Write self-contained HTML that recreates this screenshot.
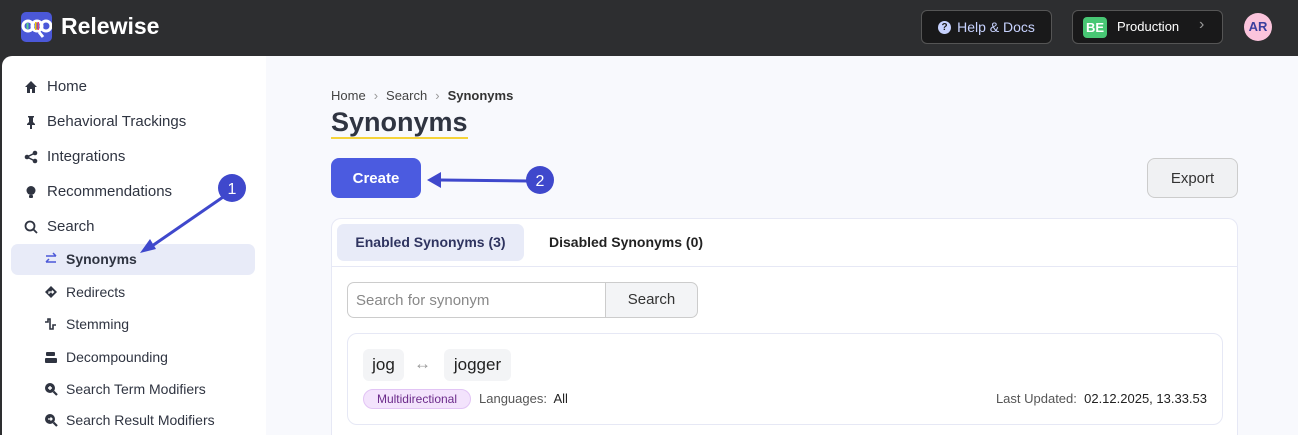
<!DOCTYPE html>
<html style="width:1298px;height:435px;overflow:hidden"><head><style>
*{box-sizing:border-box;margin:0;padding:0}
body{width:1298px;height:435px;overflow:hidden;background:#2d2e30;font-family:"Liberation Sans",sans-serif;position:relative}
.hdr{position:absolute;left:0;top:0;width:1298px;height:56px;background:#2d2e30}
.side{position:absolute;left:2px;top:56px;width:264px;height:379px;background:#fff;border-top-left-radius:10px;overflow:hidden}
.main{position:absolute;left:266px;top:56px;width:1032px;height:379px;background:#f8f9fd;overflow:hidden}
.ni{position:absolute;left:22px;font-size:15px;color:#2f3441;display:flex;align-items:center}
.ni svg{margin-right:9px}
.si{position:absolute;left:42px;font-size:14px;color:#2f3441;display:flex;align-items:center}
.si svg{margin-right:8px}
.btn{position:absolute;border-radius:8px;font-size:15px;display:flex;align-items:center;justify-content:center}
</style></head><body>
<div class="hdr">
 <div style="position:absolute;left:21px;top:12px;width:31px;height:30px;background:#4b58d8;border-radius:5px;overflow:hidden">
  <svg width="31" height="30" viewBox="0 0 31 30"><circle cx="7" cy="14" r="5" fill="none" stroke="#fff" stroke-width="3"/><circle cx="16" cy="14" r="5" fill="none" stroke="#fff" stroke-width="3"/><circle cx="25" cy="14" r="5" fill="none" stroke="#fff" stroke-width="3"/><rect x="14" y="10" width="1.5" height="8" fill="#f5c400"/><rect x="16.5" y="10" width="1.5" height="8" fill="#e94b6b"/><rect x="5.5" y="11" width="2" height="6" fill="#5ad18a"/><path d="M18 20 l4 5" stroke="#fff" stroke-width="3"/></svg>
 </div>
 <div style="position:absolute;left:61px;top:13px;font-size:23px;font-weight:bold;color:#fff">Relewise</div>
 <div style="position:absolute;left:921px;top:10px;width:131px;height:34px;border:1px solid #555;border-radius:6px;background:#19191a;color:#c7d2fe;font-size:14px;display:flex;align-items:center;justify-content:center"><span style="display:inline-block;width:13px;height:13px;border-radius:50%;background:#c7d2fe;color:#19191a;font-size:10px;font-weight:bold;text-align:center;line-height:13px;margin-right:6px">?</span>Help &amp; Docs</div>
 <div style="position:absolute;left:1072px;top:10px;width:151px;height:34px;border:1px solid #555;border-radius:6px;background:#19191a;color:#fff;font-size:13px">
  <span style="position:absolute;left:10px;top:6px;width:24px;height:21px;background:#48c774;border-radius:4px;font-weight:bold;text-align:center;line-height:21px">BE</span>
  <span style="position:absolute;left:44px;top:8px">Production</span>
  <span style="position:absolute;left:126px;top:5px;color:#999;font-size:16px">›</span>
 </div>
 <div style="position:absolute;left:1244px;top:13px;width:28px;height:28px;border-radius:50%;background:#fbc4dc;color:#3b3f9e;font-size:13px;font-weight:bold;text-align:center;line-height:28px">AR</div>
</div>
<div class="side">
 <div class="ni" style="top:22px"><svg width="14" height="14" viewBox="0 0 14 14"><path d="M7 1L1 7h2v6h3V9h2v4h3V7h2z" fill="#2f3441"/></svg>Home</div>
 <div class="ni" style="top:57px"><svg width="14" height="14" viewBox="0 0 14 14"><path d="M4 1h6v1l-1 1v4l2 2v1H8v4H6v-4H3V9l2-2V3L4 2z" fill="#2f3441"/></svg>Behavioral Trackings</div>
 <div class="ni" style="top:92px"><svg width="14" height="14" viewBox="0 0 14 14"><circle cx="11" cy="3" r="2.3" fill="#2f3441"/><circle cx="3" cy="7" r="2.3" fill="#2f3441"/><circle cx="11" cy="11" r="2.3" fill="#2f3441"/><path d="M11 3L3 7l8 4" stroke="#2f3441" stroke-width="1.5" fill="none"/></svg>Integrations</div>
 <div class="ni" style="top:127px"><svg width="14" height="14" viewBox="0 0 14 14"><circle cx="7" cy="5.5" r="4.5" fill="#2f3441"/><rect x="5" y="10" width="4" height="3" rx="1" fill="#2f3441"/></svg>Recommendations</div>
 <div class="ni" style="top:162px"><svg width="14" height="14" viewBox="0 0 14 14"><circle cx="6" cy="6" r="4.5" stroke="#2f3441" stroke-width="1.8" fill="none"/><path d="M9.5 9.5L13 13" stroke="#2f3441" stroke-width="1.8"/></svg>Search</div>
 <div style="position:absolute;left:9px;top:188px;width:244px;height:31px;background:#e8ebf8;border-radius:7px"></div>
 <div class="si" style="top:195px;font-weight:bold;color:#2f3441"><svg width="14" height="14" viewBox="0 0 14 14"><path d="M2 4h10M9 1l3 3M12 10H2M5 7l-3 3" stroke="#4b58d8" stroke-width="1.5" fill="none"/></svg>Synonyms</div>
 <div class="si" style="top:228px"><svg width="14" height="14" viewBox="0 0 14 14"><path d="M7 1l6 6-6 6-6-6z" fill="#2f3441"/><path d="M5 9V7h4M8 5.5L9.5 7 8 8.5" stroke="#fff" stroke-width="1.2" fill="none"/></svg>Redirects</div>
 <div class="si" style="top:260px"><svg width="14" height="14" viewBox="0 0 14 14"><path d="M1 5h3V2h2v10h3V8h3" stroke="#2f3441" stroke-width="1.6" fill="none"/></svg>Stemming</div>
 <div class="si" style="top:293px"><svg width="14" height="14" viewBox="0 0 14 14"><rect x="2" y="2" width="9" height="4" rx="1" fill="#2f3441"/><rect x="1" y="8" width="12" height="5" rx="1" fill="#2f3441"/></svg>Decompounding</div>
 <div class="si" style="top:325px"><svg width="14" height="14" viewBox="0 0 14 14"><circle cx="6" cy="6" r="5" fill="#2f3441"/><path d="M9.5 9.5L13 13" stroke="#2f3441" stroke-width="2.2"/><path d="M4 6h4M6 4v4" stroke="#fff" stroke-width="1.4"/></svg>Search Term Modifiers</div>
 <div class="si" style="top:356px"><svg width="14" height="14" viewBox="0 0 14 14"><circle cx="6" cy="6" r="5" fill="#2f3441"/><path d="M9.5 9.5L13 13" stroke="#2f3441" stroke-width="2.2"/><path d="M4 6h4M6.5 4.5L8 6 6.5 7.5" stroke="#fff" stroke-width="1.3" fill="none"/></svg>Search Result Modifiers</div>
</div>
<div class="main">
 <div style="position:absolute;left:65px;top:32px;font-size:13px;color:#444"><span>Home</span><span style="color:#999;margin:0 8px">›</span><span>Search</span><span style="color:#999;margin:0 8px">›</span><span style="font-weight:bold;color:#333">Synonyms</span></div>
 <div style="position:absolute;left:65px;top:51px;font-size:27px;font-weight:bold;color:#2f3441;border-bottom:2px solid #f5d33a;line-height:30px">Synonyms</div>
 <div class="btn" style="left:65px;top:102px;width:90px;height:40px;background:#4b5be0;color:#fff;font-weight:bold">Create</div>
 <div class="btn" style="left:881px;top:102px;width:91px;height:40px;background:#f0f1f3;border:1px solid #ccc;color:#333">Export</div>
 <div style="position:absolute;left:65px;top:162px;width:907px;height:217px;background:#fff;border:1px solid #e6e8f5;border-bottom:none;border-radius:10px 10px 0 0">
  <div style="position:absolute;left:5px;top:5px;width:187px;height:37px;background:#e8ebf8;border-radius:7px;color:#2f3460;font-size:14px;font-weight:bold;text-align:center;line-height:37px">Enabled Synonyms (3)</div>
  <div style="position:absolute;left:217px;top:15px;color:#222;font-size:14px;font-weight:bold">Disabled Synonyms (0)</div>
  <div style="position:absolute;left:0;top:47px;width:905px;border-top:1px solid #e6e8f5"></div>
  <div style="position:absolute;left:15px;top:63px;width:259px;height:36px;border:1px solid #ccc;border-radius:7px 0 0 7px;color:#888;font-size:15px;padding:9px 8px">Search for synonym</div>
  <div style="position:absolute;left:273px;top:63px;width:93px;height:36px;border:1px solid #ccc;border-radius:0 7px 7px 0;background:#f3f4f6;color:#333;font-size:15px;text-align:center;line-height:34px">Search</div>
  <div style="position:absolute;left:15px;top:114px;width:876px;height:92px;border:1px solid #e6e8f5;border-radius:10px">
   <div style="position:absolute;left:15px;top:15px;width:41px;height:32px;background:#f3f4f6;border-radius:6px;font-size:17px;color:#222;text-align:center;line-height:32px">jog</div>
   <div style="position:absolute;left:66px;top:20px;color:#999;font-size:17px">↔</div>
   <div style="position:absolute;left:96px;top:15px;width:67px;height:32px;background:#f3f4f6;border-radius:6px;font-size:17px;color:#222;text-align:center;line-height:32px">jogger</div>
   <div style="position:absolute;left:15px;top:55px;width:108px;height:20px;background:#f3e3fc;border:1px solid #e2c4f5;border-radius:10px;color:#6b2a8a;font-size:12px;text-align:center;line-height:18px">Multidirectional</div>
   <div style="position:absolute;left:131px;top:57px;font-size:13px;color:#555">Languages:&nbsp; <span style="color:#222">All</span></div>
   <div style="position:absolute;right:15px;top:57px;font-size:13px;color:#555">Last Updated:&nbsp; <span style="color:#222">02.12.2025, 13.33.53</span></div>
  </div>
 </div>
</div>
<svg style="position:absolute;left:0;top:0" width="1298" height="435">
 <path d="M226 195L152 246" stroke="#3f48cc" stroke-width="3"/><path d="M140 253l10-14 6 10z" fill="#3f48cc"/>
 <circle cx="232" cy="188" r="14" fill="#3f48cc"/><text x="232" y="194" fill="#fff" font-size="16" text-anchor="middle" font-family="Liberation Sans">1</text>
 <path d="M528 181L440 180" stroke="#3f48cc" stroke-width="3"/><path d="M427 180l14-8v16z" fill="#3f48cc"/>
 <circle cx="540" cy="180" r="14" fill="#3f48cc"/><text x="540" y="186" fill="#fff" font-size="16" text-anchor="middle" font-family="Liberation Sans">2</text>
</svg>
</body></html>
